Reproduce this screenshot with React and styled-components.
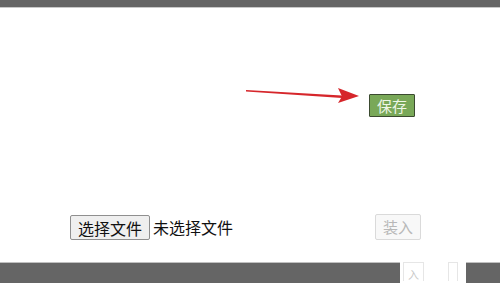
import React from 'react';
import styled, {createGlobalStyle} from 'styled-components';

const Global = createGlobalStyle`
html, body {
  margin: 0;
  padding: 0;
  background: #ffffff;
  font-family: "Microsoft YaHei", "Noto Sans CJK SC", "Noto Sans", sans-serif;
}
`

const Page = styled.div`
width: 500px;
height: 283px;
display: flex;
flex-direction: column;
overflow: hidden;
background: #fff;
& > * {
  flex-shrink: 0;
}
`
const TopBar = styled.div`
height: 7px;
background: #656565;
border-bottom: 1px solid #c8c8c8;
`
const SaveRow = styled.div`
display: flex;
align-items: flex-start;
padding-left: 246px;
margin-top: 79px;
height: 30px;
`
const Arrow = styled.svg`
width: 114px;
height: 16px;
margin-top: 1px;
`
const SaveButton = styled.button`
margin-left: 9px;
margin-top: 7px;
width: 46px;
height: 23px;
padding: 0;
background: #79a858;
color: #eef6e6;
border: 1px solid #3b4a30;
border-radius: 1px;
font-family: inherit;
font-size: 15px;
line-height: 20px;
`
const FileRow = styled.div`
display: flex;
align-items: center;
padding-left: 70px;
margin-top: 96px;
height: 28px;
`
const ChooseButton = styled.button`
height: 25px;
width: 80px;
padding: 0;
background: #efefef;
border: 1px solid #8f8f8f;
border-radius: 2px;
font-family: inherit;
font-size: 16px;
color: #111;
`
const NoFile = styled.span`
margin-left: 3px;
font-size: 16px;
color: #111;
`
const LoadButton = styled.button`
margin-left: 142px;
margin-top: -1px;
height: 26px;
width: 46px;
padding: 0;
background: #f8f8f8;
border: 1px solid #dadada;
border-radius: 2px;
font-family: inherit;
font-size: 15px;
color: #b8b8b8;
`
const BottomBar = styled.div`
display: flex;
margin-top: 21px;
height: 21px;
`
const Dark = styled.div`
background: #656565;
border-top: 1px solid #c0c0c0;
width: ${p => p.w}px;
`
const Ghost = styled.div`
flex: 1;
display: flex;
align-items: flex-start;
gap: 24px;
padding-left: 3px;
color: #c8c8c8;
font-size: 11px;
line-height: 14px;
`
const GhostTab = styled.span`
border: 1px solid #e6e6e6;
border-bottom: none;
padding: 4px 4px 0;
height: 19px;
box-sizing: border-box;
`

export default function App() {
    return (
        <Page>
            <Global/>
            <TopBar/>
            <SaveRow>
                <Arrow viewBox="0 0 114 16">
                    <path d="M0 2 L96 7.5 L96 10 L0 3.5 Z" fill="#d6262b"/>
                    <path d="M92 0 L113 8 L92 15 L96 8.5 Z" fill="#d6262b"/>
                </Arrow>
                <SaveButton>保存</SaveButton>
            </SaveRow>
            <FileRow>
                <ChooseButton>选择文件</ChooseButton>
                <NoFile>未选择文件</NoFile>
                <LoadButton disabled>装入</LoadButton>
            </FileRow>
            <BottomBar>
                <Dark w={400}/>
                <Ghost>
                    <GhostTab>入</GhostTab>
                    <GhostTab> </GhostTab>
                </Ghost>
                <Dark w={34}/>
            </BottomBar>
        </Page>
    );
}
